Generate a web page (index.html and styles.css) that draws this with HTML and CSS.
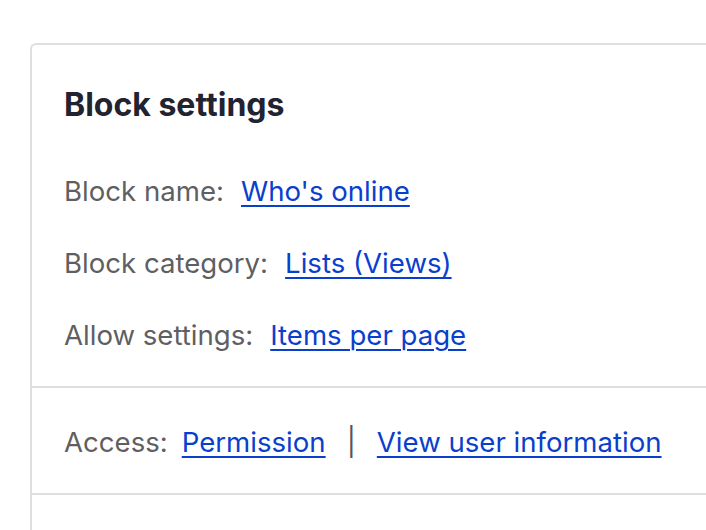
FILE: index.html
```html
<!DOCTYPE html>
<html>
<head>
<meta charset="utf-8">
<link rel="stylesheet" href="styles.css">
</head>
<body>
<div class="page">
  <section class="card">
    <div class="section main">
      <h2 class="title">Block settings</h2>
      <div class="row"><span class="label">Block name:</span><a class="link" href="#">Who's online</a></div>
      <div class="row"><span class="label">Block category:</span><a class="link" href="#">Lists (Views)</a></div>
      <div class="row"><span class="label">Allow settings:</span><a class="link" href="#">Items per page</a></div>
    </div>
    <div class="section access">
      <div class="row"><span class="label label-short">Access:</span><a class="link" href="#">Permission</a><span class="sep">|</span><a class="link" href="#">View user information</a></div>
    </div>
    <div class="section rest"></div>
  </section>
</div>
</body>
</html>
```
FILE: styles.css
```css
html, body {
  margin: 0;
  padding: 0;
  background: #ffffff;
  overflow: hidden;
  height: 530px;
}
body {
  font-family: Inter, "Noto Sans", sans-serif;
}
.page {
  padding: 43px 0 0 30px;
  width: 900px;
}
.card {
  border-left: 2px solid #dedee3;
  border-top: 2px solid #dedee3;
  border-top-left-radius: 6px;
  height: 500px;
}
.section {
  padding-left: 32px;
}
.main {
  padding-top: 42px;
  padding-bottom: 33px;
  border-bottom: 2px solid #dedee3;
}
.title {
  margin: 0 0 50px;
  font-size: 32px;
  line-height: 36px;
  font-weight: 700;
  color: #222330;
}
.row {
  display: flex;
  align-items: baseline;
  font-size: 27.6px;
  line-height: 36px;
}
.row + .row {
  margin-top: 36px;
}
.label {
  color: #5f5f63;
  margin-right: 17px;
}
.label-short {
  margin-right: 14px;
}
.link {
  color: #0a3fcd;
  text-decoration: underline;
  text-underline-offset: 4px;
  text-decoration-thickness: 2px;
}
.sep {
  color: #55555a;
  margin: 0 21px;
}
.access {
  padding-top: 36px;
  padding-bottom: 33px;
  border-bottom: 2px solid #dedee3;
}
```
